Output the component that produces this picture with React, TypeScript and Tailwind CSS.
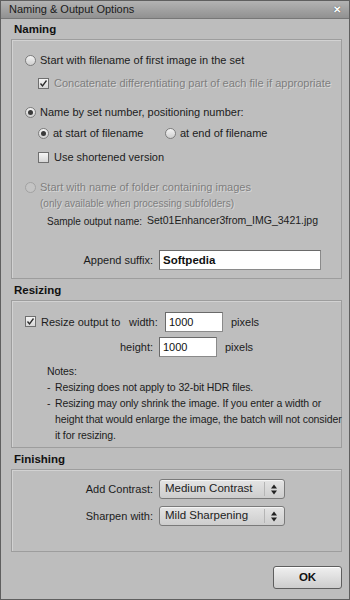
import React, { useState } from 'react';

// Small radio knob drawn with css
const Radio: React.FC<{ checked?: boolean; disabled?: boolean }> = ({ checked, disabled }) => (
  <span
    className={`inline-flex items-center justify-center w-[11px] h-[11px] rounded-full border shrink-0 ${
      disabled ? 'border-[#a2a2a2] bg-[#c4c4c4]' : 'border-[#7d7d7d] bg-gradient-to-b from-[#f4f4f4] to-[#cfcfcf]'
    }`}
  >
    {checked && <span className="w-[5px] h-[5px] rounded-full bg-[#3a3a3a]" />}
  </span>
);

const Check: React.FC<{ checked?: boolean }> = ({ checked }) => (
  <span className="inline-flex items-center justify-center w-[11px] h-[11px] border border-[#6f6f6f] bg-gradient-to-b from-[#f6f6f6] to-[#d6d6d6] shrink-0">
    {checked && (
      <svg width="9" height="9" viewBox="0 0 9 9">
        <path d="M1.5 4.5 L3.5 7 L7.5 1.5" fill="none" stroke="#2a2a2a" strokeWidth="1.3" />
      </svg>
    )}
  </span>
);

const SelectBox: React.FC<{ value: string }> = ({ value }) => (
  <div className="w-[126px] h-[20px] rounded-[3px] border border-[#7a7a7a] bg-gradient-to-b from-[#e4e4e4] to-[#cdcdcd] flex items-center shadow-[inset_0_1px_0_#f4f4f4]">
    <span className="flex-1 pl-[5px] text-[11.5px] text-[#222]">{value}</span>
    <span className="w-px h-[14px] bg-[#b5b5b5] mr-[6px]" />
    <svg width="6" height="11" viewBox="0 0 6 11" className="mr-[7px]">
      <path d="M0 4.5 L3 0.5 L6 4.5 Z" fill="#222" />
      <path d="M0 6.5 L3 10.5 L6 6.5 Z" fill="#222" />
    </svg>
  </div>
);

const Panel: React.FC<{ title: string; className?: string; children: React.ReactNode }> = ({ title, className, children }) => (
  <div className={className}>
    <div className="h-[17px] pl-[3px] text-[11.5px] font-bold text-[#111] leading-[14px]">{title}</div>
    <div className="border border-[#9d9d9d] shadow-[inset_1px_1px_0_#d2d2d2] bg-[#bebebe]">{children}</div>
  </div>
);

const App: React.FC = () => {
  const [suffix, setSuffix] = useState('Softpedia');
  const [width, setWidth] = useState('1000');
  const [height, setHeight] = useState('1000');

  const dim = 'text-[#7e7e7e] [text-shadow:1px_1px_0_#d8d8d8]';
  const field =
    'h-[20px] bg-white border border-[#8a8a8a] border-t-[#6a6a6a] border-l-[#6a6a6a] pl-[3px] text-[#111] outline-none';

  return (
    <div
      className="w-[350px] h-[600px] bg-[#bdbdbd] border border-[#5f5f5f] flex flex-col text-[11px] text-[#1c1c1c] whitespace-nowrap"
      style={{ fontFamily: '"Liberation Sans", Arial, sans-serif' }}
    >
      {/* title bar */}
      <div className="h-[18px] shrink-0 bg-gradient-to-b from-[#b3b3b3] to-[#919191] border-b border-[#777] flex items-center pl-[8px] pr-[8px]">
        <span className="flex-1 text-[11px] text-[#1a1a1a]">Naming &amp; Output Options</span>
        <span className="text-[10px] font-bold text-white [text-shadow:0_0_1px_#333] leading-none">✕</span>
      </div>

      <div className="pl-[10px] pr-[7px] flex flex-col">
        <Panel title="Naming" className="mt-[3px]">
          <div className="pt-[12px] pb-[8px] flex flex-col">
            <div className="h-[16px] flex items-center pl-[13px] gap-[4px]">
              <Radio />
              <span>Start with filename of first image in the set</span>
            </div>
            <div className="h-[16px] mt-[7px] flex items-center pl-[26px] gap-[5px]">
              <Check checked />
              <span className={dim}>Concatenate differentiating part of each file if appropriate</span>
            </div>
            <div className="h-[16px] mt-[13px] flex items-center pl-[13px] gap-[4px]">
              <Radio checked />
              <span>Name by set number, positioning number:</span>
            </div>
            <div className="h-[16px] mt-[5px] flex items-center pl-[26px]">
              <Radio checked />
              <span className="ml-[4px] w-[112px]">at start of filename</span>
              <Radio />
              <span className="ml-[4px]">at end of filename</span>
            </div>
            <div className="h-[16px] mt-[8px] flex items-center pl-[26px] gap-[5px]">
              <Check />
              <span>Use shortened version</span>
            </div>
            <div className="h-[16px] mt-[14px] flex items-center pl-[13px] gap-[4px]">
              <Radio disabled />
              <span className={dim}>Start with name of folder containing images</span>
            </div>
            <div className={`h-[16px] flex items-center pl-[28px] text-[10px] ${dim}`}>
              (only available when processing subfolders)
            </div>
            <div className="h-[16px] mt-[2px] flex items-center pl-[35px] text-[10px]">
              <span className="w-[100px] shrink-0">Sample output name:</span>
              <span className="text-[10.5px]">Set01Enhancer3from_IMG_3421.jpg</span>
            </div>
            <div className="mt-[21px] flex items-center">
              <span className="w-[147px] text-right pr-[6px]">Append suffix:</span>
              <input
                value={suffix}
                onChange={(e) => setSuffix(e.target.value)}
                className={`w-[162px] text-[11.5px] font-bold ${field}`}
              />
            </div>
          </div>
        </Panel>

        <Panel title="Resizing" className="mt-[4px]">
          <div className="pt-[11px] pb-[4px] flex flex-col">
            <div className="flex items-center">
              <span className="pl-[13px]"><Check checked /></span>
              <span className="ml-[5px] w-[88px]">Resize output to</span>
              <span className="w-[36px]">width:</span>
              <input value={width} onChange={(e) => setWidth(e.target.value)} className={`w-[58px] text-[11px] ${field}`} />
              <span className="ml-[8px]">pixels</span>
            </div>
            <div className="flex items-center mt-[5px]">
              <span className="w-[147px] text-right pr-[6px]">height:</span>
              <input value={height} onChange={(e) => setHeight(e.target.value)} className={`w-[58px] text-[11px] ${field}`} />
              <span className="ml-[8px]">pixels</span>
            </div>
            <div className="mt-[6px] pl-[35px] leading-[16px] text-[10.5px] tracking-[-0.1px]">
              <div>Notes:</div>
              <div className="flex">
                <span className="w-[8px] shrink-0">-</span>
                <span>Resizing does not apply to 32-bit HDR files.</span>
              </div>
              <div className="flex">
                <span className="w-[8px] shrink-0">-</span>
                <span>
                  Resizing may only shrink the image. If you enter a width or
                  <br />
                  height that would enlarge the image, the batch will not consider
                  <br />
                  it for resizing.
                </span>
              </div>
            </div>
          </div>
        </Panel>

        <Panel title="Finishing" className="mt-[4px]">
          <div className="pt-[9px] pb-[25px] flex flex-col gap-[7px]">
            <div className="flex items-center">
              <span className="w-[147px] text-right pr-[6px]">Add Contrast:</span>
              <SelectBox value="Medium Contrast" />
            </div>
            <div className="flex items-center">
              <span className="w-[147px] text-right pr-[6px]">Sharpen with:</span>
              <SelectBox value="Mild Sharpening" />
            </div>
          </div>
        </Panel>

        <div className="flex justify-end mt-[14px]">
          <button className="w-[69px] h-[23px] rounded-[3px] border border-[#5e5e5e] bg-gradient-to-b from-[#f0f0f0] to-[#cdcdcd] shadow-[inset_0_1px_0_#fff] text-[11.5px] font-bold text-[#111]">
            OK
          </button>
        </div>
      </div>
    </div>
  );
};

export default App;
